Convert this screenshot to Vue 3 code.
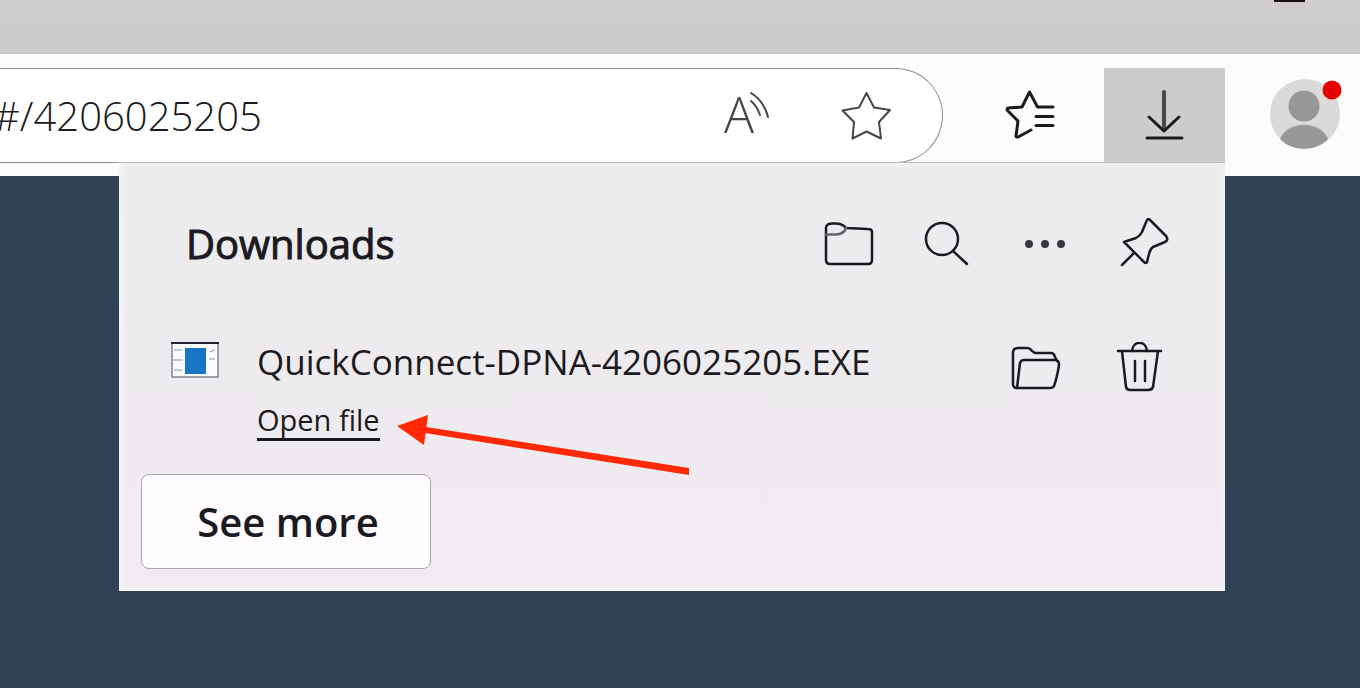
<template>
  <div class="window">
    <div class="titlebar">
      <span class="minimize"></span>
    </div>

    <header class="toolbar">
      <div class="address-bar">
        <input
          type="text"
          v-model="address"
          class="address-input"
          aria-label="Address"
          spellcheck="false"
        />
        <button type="button" class="bar-btn" aria-label="Read aloud">
          <svg width="54" height="72" viewBox="0 -9 54 72">
            <text x="5" y="44" class="read-letter">A</text>
            <path d="M32 12 Q38 17 41 26" />
            <path d="M32 4 Q45 12 49 28" />
          </svg>
        </button>
        <button type="button" class="bar-btn" aria-label="Add to favorites">
          <svg width="54" height="54" viewBox="0 0 54 54">
            <path d="M27.500 4 L35 18.500 L51 21 L40 33 L42 49.500 L27.500 42.500 L13.500 49.500 L15 33 L3.500 21.500 L20 18.500 Z" />
          </svg>
        </button>
      </div>

      <button type="button" class="tool-btn favorites" aria-label="Favorites">
        <svg width="54" height="54" viewBox="0 0 54 54">
          <path d="M49 19 H33.500 L25.500 4 L18 19 L4 20 Q2 21 4 23 L14 33 L12 48 Q12 50 15 48.500 L27 42" />
          <path d="M32 28.500 H49 M32 37.500 H49" />
        </svg>
      </button>
      <button type="button" class="tool-btn download" aria-label="Downloads">
        <svg width="54" height="54" viewBox="0 0 54 54">
          <path d="M26 4 V42" class="shaft" />
          <path d="M11 29 L26 43 L41 29" />
          <path d="M9 50 H44" />
        </svg>
      </button>
      <button type="button" class="tool-btn profile" aria-label="Profile">
        <svg width="76" height="76" viewBox="0 0 76 76">
          <circle cx="38" cy="37" r="35" fill="#dadada" />
          <circle cx="37" cy="29" r="15.500" fill="#979797" />
          <path d="M13 62 C21 43 53 43 61 62 C49 75 25 75 13 62 Z" fill="#979797" />
          <circle cx="65" cy="13" r="9.500" fill="#e70000" />
        </svg>
      </button>
    </header>

    <section class="downloads-panel">
      <div class="panel-header">
        <h2>Downloads</h2>
        <button type="button" class="panel-btn" aria-label="Open downloads folder">
          <svg width="54" height="54" viewBox="0 0 54 54">
            <path d="M4 11 V43 Q4 47 8 47 H46 Q50 47 50 43 V15 Q50 12 46 12 L24 11 Q20 6 12 6.500 Q4 6 4 11 Z" />
            <path d="M4 17.500 H14 Q22 17 24 11" class="soft" />
          </svg>
        </button>
        <button type="button" class="panel-btn" aria-label="Search downloads">
          <svg width="54" height="54" viewBox="0 0 54 54">
            <circle cx="22" cy="22" r="16" />
            <path d="M33 34 L47 47" />
          </svg>
        </button>
        <button type="button" class="panel-btn" aria-label="More options">
          <svg width="54" height="54" viewBox="0 0 54 54">
            <g class="dots">
              <circle cx="11" cy="27" r="4" />
              <circle cx="27" cy="27" r="4" />
              <circle cx="43" cy="27" r="4" />
            </g>
          </svg>
        </button>
        <button type="button" class="panel-btn" aria-label="Pin downloads">
          <svg width="54" height="54" viewBox="0 0 54 54">
            <path d="M31 3 Q32 1 34 3 L50 19 Q53 23 49 25 L37 30 Q34 32 33 37 L31 45 Q30 47 28 45 L8 25 L20 21 Q24 19 26 15 Z" />
            <path d="M18 36 L6 48" />
          </svg>
        </button>
      </div>

      <div v-for="file in files" :key="file.name" class="download-item">
        <svg class="file-icon" width="50" height="38" viewBox="0 0 50 38">
          <rect x="2" y="2" width="46" height="34" fill="#fafafc" stroke="#4c4c58" stroke-width="1" />
          <path d="M1 2 H49" stroke="#242431" stroke-width="2" />
          <path d="M4 9 H12 M3 19 H13 M4 29 H12 M40 11 L45 9 M39 18 H45" stroke="#8a929c" stroke-width="1" />
          <rect x="15" y="7" width="21" height="26" fill="#1874c4" />
        </svg>
        <div class="file-info">
          <span class="file-name">{{ file.name }}</span>
          <a href="#" class="open-link" @click.prevent>Open file</a>
        </div>
        <button type="button" class="item-btn" aria-label="Show in folder">
          <svg width="54" height="54" viewBox="0 0 54 54">
            <path d="M8 46 Q4 46 4 42 V11 Q4 6 9 6 H18 Q21 6 23 9 L26 11 H42 Q45 11 46 15 L48 19" />
            <path d="M8 46 L11 21 Q12 18 15 18 H46 Q50 18 50 23 Q48 36 45 44 Q44 46 41 46 Z" />
          </svg>
        </button>
        <button type="button" class="item-btn" aria-label="Delete file">
          <svg width="54" height="54" viewBox="0 0 54 54">
            <path d="M5 9 H48 M9 9 L13 45 Q14 48 17 48 H35 Q39 48 40 45 L45 9" />
            <path d="M19 9 C20 -2 33 -2 34 9" />
            <path d="M22 19 V39 M32 19 V39" />
          </svg>
        </button>
      </div>

      <button type="button" class="see-more">See more</button>

      <svg class="pointer" width="294" height="64" viewBox="0 0 294 64">
        <path d="M0 11 L31 0 L27 30 Z M29 12 L292 53 L292 60 L28 18 Z" />
      </svg>
    </section>
  </div>
</template>

<script setup>
import { ref } from 'vue';

const address = ref('#/4206025205');

const files = ref([
  { name: 'QuickConnect-DPNA-4206025205.EXE' },
]);
</script>

<style>
body {
  margin: 0;
  background: #324256;
}
</style>

<style scoped>
.window {
  position: relative;
  min-height: 100vh;
  overflow: hidden;
  background: #324256;
  color: #1b1a20;
  font-family: 'Open Sans', 'Noto Sans', sans-serif;
}

button {
  display: flex;
  align-items: center;
  justify-content: center;
  flex-shrink: 0;
  padding: 0;
  border: none;
  background: none;
  color: inherit;
  font-family: inherit;
}

button svg {
  fill: none;
  stroke: #1b1a20;
  stroke-width: 2.5;
  stroke-linejoin: round;
  stroke-linecap: round;
}

.titlebar {
  display: flex;
  justify-content: flex-end;
  height: 54px;
  padding-right: 55px;
  box-sizing: border-box;
  background: linear-gradient(#cfcdd0, #cbc9cc);
}

.minimize {
  width: 31px;
  height: 2px;
  background: #1b1010;
}

.toolbar {
  display: flex;
  height: 122px;
  padding-top: 14px;
  box-sizing: border-box;
  background: #fcfcfc;
}

.address-bar {
  display: flex;
  align-items: center;
  flex: 1;
  min-width: 0;
  height: 95px;
  padding-right: 16px;
  box-sizing: border-box;
  border: 1px solid #8f8f93;
  border-left: none;
  border-radius: 0 48px 48px 0;
  background: #fff;
}

.address-input {
  flex: 1;
  min-width: 0;
  height: 60px;
  margin-left: -6px;
  padding: 0;
  border: none;
  outline: none;
  background: none;
  color: #1b1a20;
  font-family: inherit;
  font-size: 40px;
  font-weight: 300;
}

.bar-btn {
  width: 120px;
  height: 72px;
}

.bar-btn svg {
  stroke: #49434c;
  stroke-width: 2;
}

.bar-btn .read-letter {
  fill: #49434c;
  stroke: none;
  font-size: 50px;
  font-weight: 300;
}

.tool-btn {
  height: 94px;
}

.favorites {
  width: 161px;
  padding-left: 14px;
}

.favorites svg {
  stroke-width: 3;
}

.download {
  width: 121px;
  background: #cccccc;
}

.download svg {
  stroke-width: 3;
}

.download .shaft {
  stroke: #4a4a4a;
  stroke-width: 4;
}

.profile {
  width: 135px;
  padding-left: 24px;
}

.profile svg {
  stroke: none;
}

.downloads-panel {
  position: absolute;
  top: 162px;
  left: 119px;
  right: 135px;
  padding-bottom: 22px;
  border-top: 1px solid #bcbcbe;
  box-sizing: border-box;
  background: linear-gradient(#ebeced, #eeebef 35%, #efebf0);
  box-shadow: inset 0 -2px 5px #f8f6fa, inset 3px 0 6px #f5f5f8;
}

.panel-header {
  display: flex;
  align-items: center;
  height: 161px;
  padding: 0 33px 0 67px;
}

h2 {
  flex: 1;
  margin: 0;
  font-size: 40px;
  font-weight: 500;
  -webkit-text-stroke: 1px #1b1a20;
}

.panel-btn {
  width: 98px;
  height: 60px;
}

.soft {
  stroke: #66636a;
}

.dots {
  fill: #38353c;
  stroke: none;
}

.download-item {
  display: flex;
  height: 150px;
  padding: 14px 33px 0 51px;
  box-sizing: border-box;
}

.file-icon {
  flex-shrink: 0;
  margin-top: 3px;
  fill: none;
}

.file-info {
  display: flex;
  flex: 1;
  flex-direction: column;
  align-items: flex-start;
  min-width: 0;
  padding-left: 37px;
}

.file-name {
  font-size: 35px;
  line-height: 48px;
  white-space: nowrap;
}

.open-link {
  margin-top: 16px;
  border-bottom: 3px solid #1b1a20;
  color: inherit;
  font-size: 29px;
  line-height: 36px;
  text-decoration: none;
}

.item-btn {
  width: 104px;
  height: 62px;
}

.see-more {
  width: 290px;
  height: 95px;
  margin-left: 22px;
  padding-left: 4px;
  border: 1px solid #aaa5ac;
  border-radius: 8px;
  background: #fefcff;
  font-size: 40px;
  font-weight: 600;
}

/* red arrow aimed at the "Open file" link */
.pointer {
  position: absolute;
  top: 252px;
  left: 278px;
  fill: #ff2a05;
}
</style>
